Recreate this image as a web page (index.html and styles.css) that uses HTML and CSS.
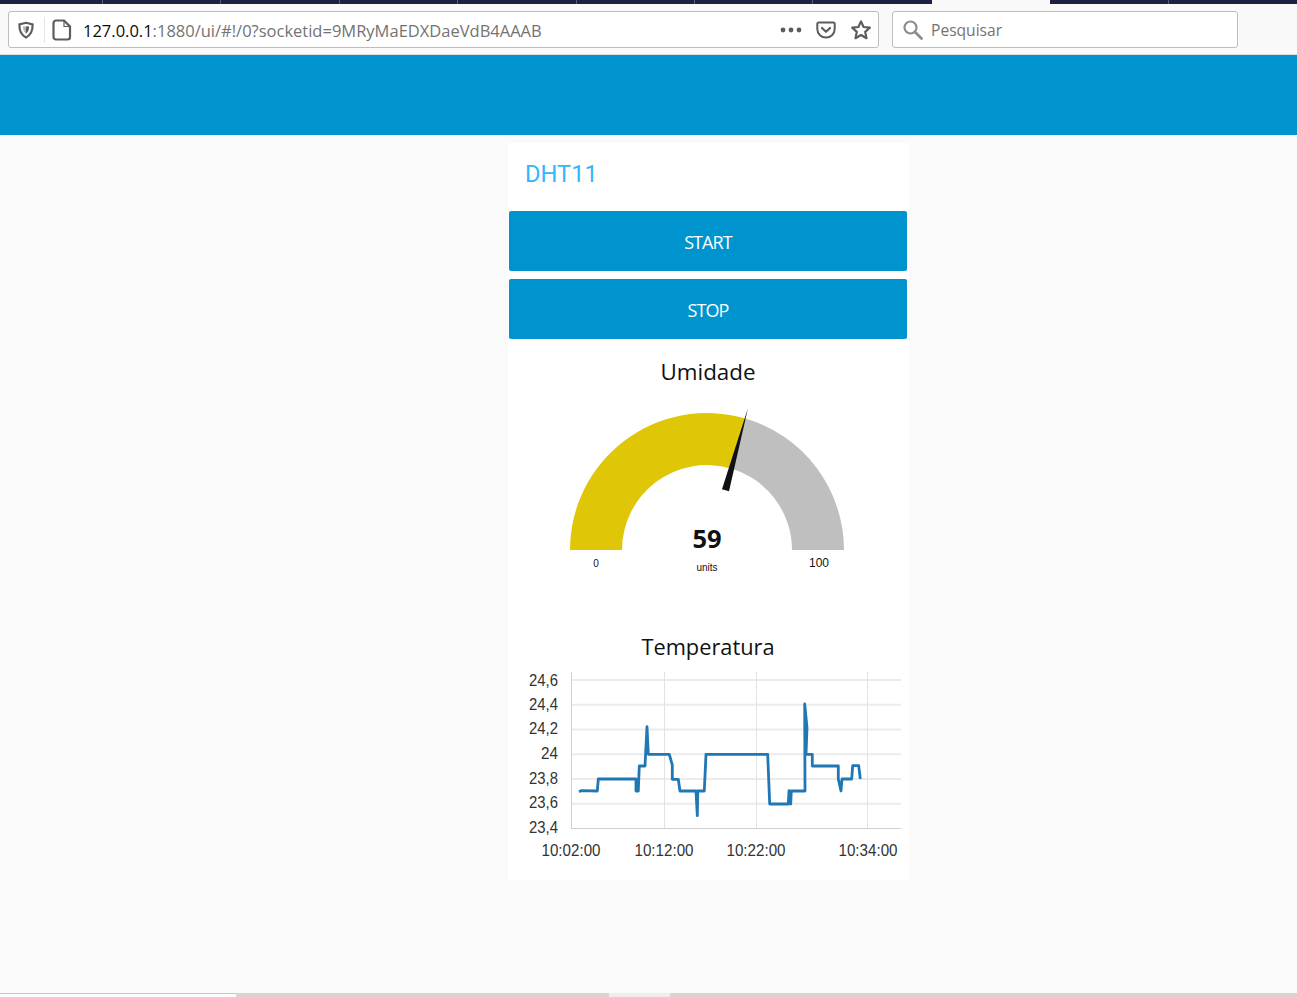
FILE: index.html
```html
<!DOCTYPE html>
<html>
  <head>
    <meta charset="UTF-8">
    <title>Node-RED Dashboard</title>
    <link rel="stylesheet" href="styles.css">
  </head>
  <body>
    <div class="tabstrip">
      <div class="tab tab-first"></div>
      <div class="tab"></div>
      <div class="tab"></div>
      <div class="tab"></div>
      <div class="tab"></div>
      <div class="tab"></div>
      <div class="tab"></div>
      <div class="tab tab-before-active"></div>
      <div class="tab tab-active"></div>
      <div class="tab"></div>
      <div class="tab tab-last"></div>
    </div>

    <div class="toolbar">
      <div class="urlbar">
        <svg class="icon-shield" width="18" height="18" viewBox="0 0 18 18">
          <path d="M9 1.8 L15.6 3.4 C15.8 9.5 13.8 14 9 16.4 C4.2 14 2.2 9.5 2.4 3.4 Z" fill="none" stroke="#5c5c5f" stroke-width="2.2"/>
          <path d="M6 5.6 H12 C12 9 11.2 11.2 9 12.6 C6.8 11.2 6 9 6 5.6 Z" fill="#b4b4b6"/>
          <path d="M9 5.6 H12 C12 9 11.2 11.2 9 12.6 Z" fill="#5c5c5f"/>
        </svg>
        <span class="urlbar-divider"></span>
        <svg class="icon-page" width="20" height="22" viewBox="0 0 20 22">
          <path d="M4 1.5 H12 L18 7.5 V18 A2.5 2.5 0 0 1 15.5 20.5 H4 A2.5 2.5 0 0 1 1.5 18 V4 A2.5 2.5 0 0 1 4 1.5 Z" fill="none" stroke="#5c5c5f" stroke-width="2.2"/>
          <path d="M12 2 V7.5 H17.5" fill="none" stroke="#5c5c5f" stroke-width="1.2"/>
        </svg>
        <div class="url"><span class="url-host">127.0.0.1</span>:1880/ui/#!/0?socketid=9MRyMaEDXDaeVdB4AAAB</div>
        <svg class="icon-dots" width="22" height="6" viewBox="0 0 22 6">
          <circle cx="3" cy="3" r="2.4" fill="#5c5c5f"/>
          <circle cx="11" cy="3" r="2.4" fill="#5c5c5f"/>
          <circle cx="19" cy="3" r="2.4" fill="#5c5c5f"/>
        </svg>
        <svg class="icon-pocket" width="20" height="18" viewBox="0 0 20 18">
          <path d="M2.5 1.5 H17.5 A1.2 1.2 0 0 1 18.7 2.7 V8 C18.7 13 14.5 16.6 10 16.6 C5.5 16.6 1.3 13 1.3 8 V2.7 A1.2 1.2 0 0 1 2.5 1.5 Z" fill="none" stroke="#5c5c5f" stroke-width="2"/>
          <path d="M6 7 L10 10.8 L14 7" fill="none" stroke="#5c5c5f" stroke-width="2.2" stroke-linecap="round" stroke-linejoin="round"/>
        </svg>
        <svg class="icon-star" width="20" height="20" viewBox="0 0 20 20">
          <path d="M10 1.4 L12.6 7 L18.8 7.7 L14.2 11.9 L15.5 18.2 L10 15 L4.5 18.2 L5.8 11.9 L1.2 7.7 L7.4 7 Z" fill="none" stroke="#5c5c5f" stroke-width="2.2" stroke-linejoin="round"/>
        </svg>
      </div>
      <div class="searchbar">
        <svg class="icon-search" width="20" height="20" viewBox="0 0 20 20">
          <circle cx="7.5" cy="7.5" r="6" fill="none" stroke="#8c8c8e" stroke-width="2.2"/>
          <path d="M12 12 L18.5 18.5" stroke="#8c8c8e" stroke-width="2.8" stroke-linecap="round"/>
        </svg>
        <span class="search-placeholder">Pesquisar</span>
      </div>
    </div>

    <header class="header"></header>

    <main class="content">
      <section class="panel">
        <h1 class="group-title">DHT11</h1>
        <button class="action-button action-button-first">START</button>
        <button class="action-button">STOP</button>

        <h2 class="widget-title widget-title-gauge">Umidade</h2>
        <svg class="gauge" width="400" height="190" viewBox="508 390 400 190">
          <path d="M570 550 A137 137 0 0 1 745.2 418.5 L730.7 468.4 A85 85 0 0 0 622 550 Z" fill="#dfc708"/>
          <path d="M745.2 418.5 A137 137 0 0 1 844 550 H792 A85 85 0 0 0 730.7 468.4 Z" fill="#bfbfbf"/>
          <path d="M748 408 L729 491.2 L722 489.3 Z" fill="#111111"/>
          <text class="gauge-value" x="707" y="548" text-anchor="middle">59</text>
          <text class="gauge-units" x="707" y="571" text-anchor="middle">units</text>
          <text class="gauge-min" x="596" y="567" text-anchor="middle">0</text>
          <text class="gauge-max" x="819" y="567" text-anchor="middle">100</text>
        </svg>

        <h2 class="widget-title widget-title-chart">Temperatura</h2>
        <svg class="chart" width="400" height="205" viewBox="508 665 400 205">
          <g class="grid">
            <path d="M571.5 680 H901 M571.5 704.8 H901 M571.5 729.5 H901 M571.5 754.3 H901 M571.5 779 H901 M571.5 803.8 H901"/>
            <path class="grid-vertical" d="M664.5 672 V829 M756.5 672 V829 M867.5 672 V829"/>
          </g>
          <path class="axis" d="M571.5 672 V829 M571.5 828.5 H901"/>
          <g class="y-labels">
            <text x="558" y="685.5" textLength="29" lengthAdjust="spacingAndGlyphs">24,6</text>
            <text x="558" y="710" textLength="29" lengthAdjust="spacingAndGlyphs">24,4</text>
            <text x="558" y="734" textLength="29" lengthAdjust="spacingAndGlyphs">24,2</text>
            <text x="558" y="759" textLength="17" lengthAdjust="spacingAndGlyphs">24</text>
            <text x="558" y="784" textLength="29" lengthAdjust="spacingAndGlyphs">23,8</text>
            <text x="558" y="808" textLength="29" lengthAdjust="spacingAndGlyphs">23,6</text>
            <text x="558" y="833" textLength="29" lengthAdjust="spacingAndGlyphs">23,4</text>
          </g>
          <g class="x-labels">
            <text x="571" y="856" textLength="59" lengthAdjust="spacingAndGlyphs">10:02:00</text>
            <text x="664" y="856" textLength="59" lengthAdjust="spacingAndGlyphs">10:12:00</text>
            <text x="756" y="856" textLength="59" lengthAdjust="spacingAndGlyphs">10:22:00</text>
            <text x="868" y="856" textLength="59" lengthAdjust="spacingAndGlyphs">10:34:00</text>
          </g>
          <polyline class="series" points="579,791.7 581,790.7 597.3,791 598.3,779 636,779 636,791 638.3,791 639.3,766 645,766 647,726.7 648.3,754.3 669.3,754.3 672.3,765 672.3,779.3 678.3,779.3 680,791 696,791 697.3,815.7 697.8,791 704.3,791 706,754.3 767.7,754.3 769.7,804 788.3,804 789,790.7 790.7,804 791.3,791 805,791 804.7,704 807,728 806,754.3 812.3,754.3 812.3,766 838.3,766 838.3,779 841,791 842,779 851.7,779 852.7,765.7 858.7,765.7 860.3,779"/>
        </svg>
      </section>
    </main>

    <div class="scrollbar">
      <div class="scrollbar-start"></div>
      <div class="scrollbar-track"></div>
      <div class="scrollbar-thumb"></div>
      <div class="scrollbar-track scrollbar-track-end"></div>
    </div>
  </body>
</html>
```

FILE: styles.css
```css
html, body {
  height: 100%;
}

body {
  margin: 0;
  height: 997px;
  overflow: hidden;
  display: flex;
  flex-direction: column;
  background-color: #FAFAFA;
  font-family: "Open Sans", "Noto Sans", sans-serif;
}

/* browser chrome */
.tabstrip {
  display: flex;
  height: 4px;
  background-color: #1C2042;
}

.tab {
  box-sizing: border-box;
  width: 118.4px;
  border-right: 1px solid #55587A;
}

.tab-first {
  width: 103px;
}

.tab-before-active {
  border-right: none;
}

.tab-active {
  background-color: #F9F9FA;
  border-right: none;
}

.tab-last {
  flex: 1;
  border-right: none;
}

.toolbar {
  box-sizing: border-box;
  height: 51px;
  display: flex;
  gap: 13px;
  padding: 7px 0 0 8px;
  background-color: #F9F9FA;
  border-bottom: 1px solid #E1E1E2;
}

.urlbar,
.searchbar {
  box-sizing: border-box;
  height: 37px;
  display: flex;
  align-items: center;
  background-color: #FFFFFF;
  border: 1px solid #BDBDBE;
  border-radius: 3px;
}

.urlbar {
  width: 871px;
}

.searchbar {
  width: 346px;
}

.icon-shield {
  margin-left: 8px;
}

.urlbar-divider {
  width: 1px;
  height: 26px;
  margin: 0 7px 0 9px;
  background-color: #E4E4E5;
}

.url {
  flex: 1;
  margin-left: 11px;
  padding-top: 1px;
  font-size: 16.5px;
  color: #737373;
  white-space: nowrap;
}

.url-host {
  color: #0C0C0D;
}

.icon-dots {
  margin-right: 14px;
}

.icon-pocket {
  margin-right: 15px;
}

.icon-star {
  margin-right: 7px;
}

.icon-search {
  margin-left: 10px;
}

.search-placeholder {
  margin-left: 8px;
  padding-top: 1px;
  font-size: 15.6px;
  color: #737373;
}

/* dashboard */
.header {
  height: 80px;
  background-color: #0094CE;
}

.content {
  flex: 1;
  padding: 8px 0 0 508px;
}

.panel {
  box-sizing: border-box;
  width: 401px;
  height: 737px;
  padding: 0 2px 0 1px;
  background-color: #FFFFFF;
}

.group-title {
  height: 68px;
  margin: 0;
  padding: 17px 0 0 16px;
  box-sizing: border-box;
  font-family: "Roboto", sans-serif;
  font-size: 23.7px;
  font-weight: 400;
  line-height: 28px;
  color: #33B5FF;
}

.action-button {
  display: block;
  width: 398px;
  height: 60px;
  padding: 2px 0 0;
  margin-top: 8px;
  border: none;
  border-radius: 2px;
  background-color: #0094CE;
  color: #FFFFFF;
  font-family: "Open Sans", sans-serif;
  font-size: 18px;
  font-weight: 400;
  letter-spacing: -0.9px;
}

.action-button-first {
  margin-top: 0;
}

.widget-title {
  margin: 0;
  font-weight: 400;
  line-height: 30px;
  text-align: center;
  color: #111111;
}

.widget-title-gauge {
  margin-top: 18px;
  font-size: 22.4px;
}

.widget-title-chart {
  margin-top: 52px;
  font-size: 21.8px;
}

.gauge,
.chart {
  display: block;
  margin-left: -1px;
}

.gauge {
  margin-top: 3px;
}

.chart {
  margin-top: 3px;
}

.gauge text,
.chart text {
  fill: #111111;
}

.gauge-value {
  font-family: "Open Sans", sans-serif;
  font-size: 25.5px;
  font-weight: 700;
}

.gauge-units {
  font-family: "Liberation Sans", sans-serif;
  font-size: 10px;
}

.gauge-min {
  font-family: "Liberation Sans", sans-serif;
  font-size: 10px;
}

.gauge-max {
  font-family: "Liberation Sans", sans-serif;
  font-size: 12px;
}

.grid path {
  fill: none;
  stroke: #EBEBEB;
  stroke-width: 2;
}

.grid .grid-vertical {
  stroke: #E2E2E2;
  stroke-width: 1;
}

.axis {
  fill: none;
  stroke: #CFCFCF;
  stroke-width: 1;
}

.y-labels text,
.x-labels text {
  font-family: "Liberation Sans", sans-serif;
  font-size: 16.5px;
}

.chart .y-labels text {
  text-anchor: end;
  fill: #333333;
}

.chart .x-labels text {
  text-anchor: middle;
  fill: #333333;
}

.series {
  fill: none;
  stroke: #1F77B4;
  stroke-width: 2.8;
  stroke-linejoin: round;
}

.scrollbar {
  height: 4px;
  display: flex;
}

.scrollbar-start {
  box-sizing: border-box;
  width: 236px;
  background-color: #FFFFFF;
  border-top: 1px solid #C8C8C8;
}

.scrollbar-track {
  width: 373px;
  background-color: #DDD1D1;
}

.scrollbar-track-end {
  flex: 1;
}

.scrollbar-thumb {
  width: 61px;
  background-color: #EFECEB;
}
```
